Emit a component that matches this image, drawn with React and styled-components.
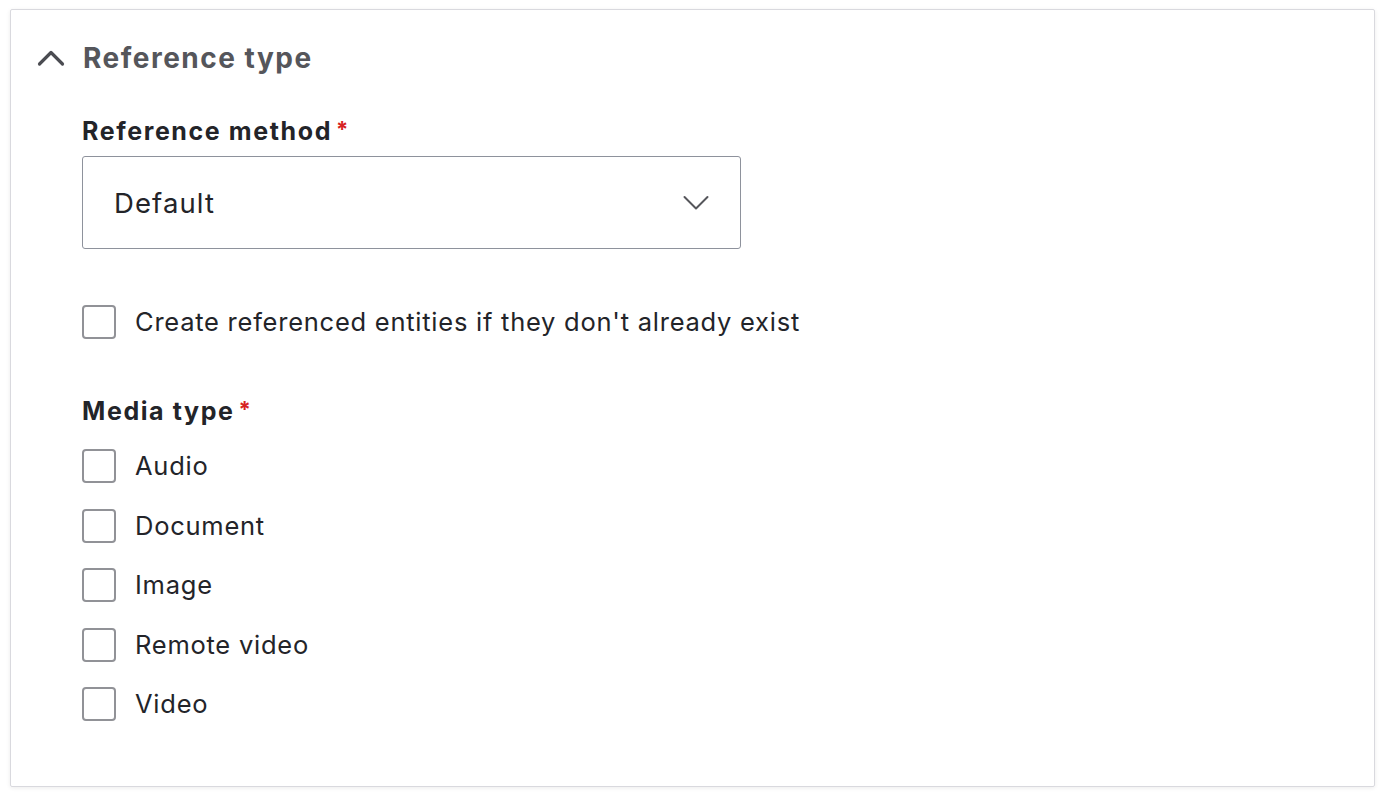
import React from 'react'
import styled, { createGlobalStyle } from 'styled-components'

const GlobalStyle = createGlobalStyle`
  html, body {
    margin: 0;
    padding: 0;
    background: #ffffff;
  }
  body {
    font-family: Inter, "Noto Sans", Arial, sans-serif;
    color: #232429;
  }
`;

const mediaTypes = ['Audio', 'Document', 'Image', 'Remote video', 'Video']

const App = () => {
  return (
    <Page>
      <GlobalStyle />
      <Details>
        <Summary>
          <Chevron viewBox="0 0 28 18" aria-hidden="true">
            <path d="M2.5 15 L14 3.5 L25.5 15" fill="none" stroke="#4b4c52" strokeWidth="3.2" strokeLinecap="round" strokeLinejoin="round" />
          </Chevron>
          <Title>Reference type</Title>
        </Summary>
        <Body>
          <Field>
            <Label>Reference method<Required>*</Required></Label>
            <Select>
              <span>Default</span>
              <SelectArrow viewBox="0 0 26 16" aria-hidden="true">
                <path d="M1.5 2 L13 13.5 L24.5 2" fill="none" stroke="#55565b" strokeWidth="2" strokeLinecap="round" strokeLinejoin="round" />
              </SelectArrow>
            </Select>
          </Field>
          <CheckRow spaced>
            <Box />
            <CheckLabel>Create referenced entities if they don't already exist</CheckLabel>
          </CheckRow>
          <Field>
            <Label>Media type<Required>*</Required></Label>
            <CheckList>
              {mediaTypes.map(t => (
                <CheckRow key={t}>
                  <Box />
                  <CheckLabel>{t}</CheckLabel>
                </CheckRow>
              ))}
            </CheckList>
          </Field>
        </Body>
      </Details>
    </Page>
  )
}

const Page = styled.div`
  padding: 9px 8px 10px 10px;
  width: 1383px;
  box-sizing: border-box;
`;

const Details = styled.section`
  border: 1px solid #d9d9de;
  border-radius: 2px;
  box-shadow: 0 1px 4px rgba(0, 0, 0, 0.08);
  height: 778px;
  box-sizing: border-box;
`;

const Summary = styled.div`
  display: flex;
  align-items: center;
  height: 96px;
  padding: 0 0 0 26px;
  box-sizing: border-box;
`;

const Chevron = styled.svg`
  width: 28px;
  height: 18px;
  margin-right: 18px;
  margin-top: 0;
`;

const Title = styled.h2`
  margin: 0;
  font-size: 28px;
  font-weight: 700;
  color: #55565b;
  letter-spacing: 1.5px;
`;

const Body = styled.div`
  padding: 7px 0 0 71px;
  display: flex;
  flex-direction: column;
`;

const Field = styled.div`
  display: flex;
  flex-direction: column;
`;

const Label = styled.div`
  font-size: 25px;
  font-weight: 700;
  color: #232429;
  line-height: 32px;
  height: 32px;
  margin-bottom: 11px;
  letter-spacing: 1.6px;
`;

const Required = styled.span`
  color: #d72222;
  font-size: 22px;
  margin-left: 4px;
  vertical-align: 3px;
  letter-spacing: 0;
`;

const Select = styled.div`
  width: 659px;
  height: 93px;
  box-sizing: border-box;
  border: 1.5px solid #8e929c;
  border-radius: 3px;
  display: flex;
  align-items: center;
  justify-content: space-between;
  padding: 0 31px 0 31px;
  font-size: 27.5px;
  letter-spacing: 1.1px;
  color: #232429;
`;

const SelectArrow = styled.svg`
  width: 26px;
  height: 16px;
`;

const CheckList = styled.div`
  display: flex;
  flex-direction: column;
  gap: 25.5px;
  margin-top: 13px;
`;

const CheckRow = styled.label`
  display: flex;
  align-items: center;
  height: 34px;
  margin: ${props => (props.spaced ? '56px 0 54px' : '0')};
`;

const Box = styled.span`
  width: 34px;
  height: 34px;
  box-sizing: border-box;
  border: 2px solid #919297;
  border-radius: 4px;
  background: #fff;
  flex: none;
  margin-right: 19px;
`;

const CheckLabel = styled.span`
  font-size: 25.5px;
  letter-spacing: 0.75px;
  color: #232429;
  line-height: 34px;
`;

export default App
